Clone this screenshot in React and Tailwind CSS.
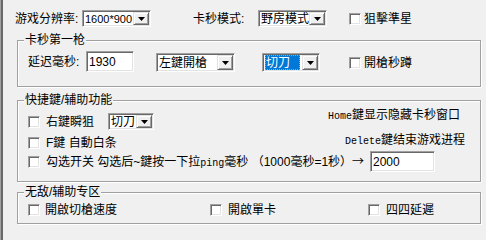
import React from "react";

const Arrow = () => (
  <svg width="7" height="4" viewBox="0 0 7 4">
    <path d="M0 0h7L3.5 4z" fill="#000" />
  </svg>
);

const Select = ({ size, text, focus }) => (
  <div className={`flex shrink-0 border border-t-[#a0a0a0] border-l-[#a0a0a0] border-r-white border-b-white ${size}`}>
    <div className="flex flex-1 bg-white p-px shadow-[inset_1px_1px_0_#696969,inset_-1px_-1px_0_#e3e3e3]">
      <div className="flex flex-1 items-center overflow-hidden whitespace-nowrap pl-px">
        {focus ? (
          <span className="flex h-full items-center bg-[#0078d7] pl-px pr-[10px] text-white outline-1 outline-dotted outline-[#d9a23a] -outline-offset-1">
            {text}
          </span>
        ) : (
          text
        )}
      </div>
      <div className="flex w-[16px] shrink-0 items-center justify-center border border-t-[#e3e3e3] border-l-[#e3e3e3] border-r-[#696969] border-b-[#696969] bg-[#f0f0f0] shadow-[inset_1px_1px_0_#fff,inset_-1px_-1px_0_#a0a0a0]">
        <Arrow />
      </div>
    </div>
  </div>
);

const Box = () => (
  <div className="h-[12px] w-[12px] shrink-0 border border-t-[#a0a0a0] border-l-[#a0a0a0] border-r-white border-b-white bg-white shadow-[inset_1px_1px_0_#696969,inset_-1px_-1px_0_#e3e3e3]" />
);

const Input = ({ size, value }) => (
  <div className={`flex shrink-0 items-center border border-t-[#a0a0a0] border-l-[#a0a0a0] border-r-white border-b-white bg-white pl-[2px] shadow-[inset_1px_1px_0_#696969,inset_-1px_-1px_0_#e3e3e3] ${size}`}>
    {value}
  </div>
);

const Group = ({ title, size, children }) => (
  <div className={`relative ml-[14px] w-[464px] border border-[#a0a0a0] shadow-[inset_1px_1px_0_#fff,1px_1px_0_#fff] ${size}`}>
    <span className="absolute left-[6px] top-[-9px] bg-[#f0f0f0] px-px leading-[16px]">{title}</span>
    {children}
  </div>
);

const Mono = ({ children }) => (
  <span className="font-['Liberation_Mono',monospace] text-[10px]">{children}</span>
);

export default function App() {
  return (
    <div className="flex h-[240px] w-[486px] bg-[#f0f0f0] font-['Liberation_Sans','Noto_Sans_CJK_SC',sans-serif] text-[12px] leading-[16px] text-black">
      <div className="w-px bg-[#a0a0a0]" />
      <div className="w-[2px] bg-[#696969]" />
      <div className="flex flex-1 flex-col">
        {/* top row */}
        <div className="mt-[10px] flex h-[17px] items-center pl-[12px]">
          <span className="w-[67px] shrink-0">游戏分辨率:</span>
          <Select size="w-[69px] h-[17px] text-[11px]" text="1600*900" />
          <span className="ml-[42px] w-[65px] shrink-0">卡秒模式:</span>
          <Select size="w-[69px] h-[17px]" text="野房模式" />
          <div className="ml-[22px]"><Box /></div>
          <span className="ml-[3px]">狙擊準星</span>
        </div>

        {/* 卡秒第一枪 */}
        <Group title="卡秒第一枪" size="mt-[13px] h-[47px]">
          <div className="flex items-start pl-[10px] pt-[10px]">
            <span className="mt-[3px] w-[58px] shrink-0">延迟毫秒:</span>
            <Input size="w-[48px] h-[21px]" value="1930" />
            <div className="ml-[22px] mt-[2px]">
              <Select size="w-[79px] h-[19px]" text="左鍵開槍" />
            </div>
            <div className="ml-[27px] mt-[2px]">
              <Select size="w-[58px] h-[19px]" text="切刀" focus />
            </div>
            <div className="ml-[29px] mt-[6px]"><Box /></div>
            <span className="ml-[3px] mt-[4px]">開槍秒蹲</span>
          </div>
        </Group>

        {/* 快捷鍵/辅助功能 */}
        <Group title="快捷鍵/辅助功能" size="mt-[13px] h-[82px]">
          <div className="flex flex-col pl-[10px]">
            <div className="flex">
              <div className="flex w-[300px] flex-col pt-[12px]">
                <div className="flex h-[17px] items-center">
                  <Box />
                  <span className="ml-[6px] w-[48px]">右鍵瞬狙</span>
                  <div className="ml-[14px]">
                    <Select size="w-[46px] h-[17px]" text="切刀" />
                  </div>
                </div>
                <div className="mt-[4px] flex h-[17px] items-center">
                  <Box />
                  <span className="ml-[6px]">F鍵 自動白条</span>
                </div>
              </div>
              <div className="flex flex-col pt-[6px]">
                <span><Mono>Home</Mono>鍵显示隐藏卡秒窗口</span>
                <span className="ml-[17px] mt-[7px]"><Mono>Delete</Mono>鍵结束游戏进程</span>
              </div>
            </div>
            <div className="flex h-[21px] items-center">
              <Box />
              <span className="ml-[6px] mt-[2px] w-[324px] shrink-0 whitespace-nowrap">
                勾选开关 勾选后~鍵按一下拉<Mono>ping</Mono>毫秒 （1000毫秒=1秒）<span className="font-['Noto_Sans_CJK_SC',sans-serif]">→</span>
              </span>
              <Input size="w-[65px] h-[21px]" value="2000" />
            </div>
          </div>
        </Group>

        {/* 无敌/辅助专区 */}
        <Group title="无敌/辅助专区" size="mt-[10px] h-[32px]">
          <div className="mt-[9px] flex h-[16px] items-center pl-[10px]">
            <div className="flex w-[182px] shrink-0 items-center">
              <Box />
              <span className="ml-[5px]">開啟切槍速度</span>
            </div>
            <div className="flex w-[158px] shrink-0 items-center">
              <Box />
              <span className="ml-[6px]">開啟單卡</span>
            </div>
            <div className="flex items-center">
              <Box />
              <span className="ml-[6px]">四四延遲</span>
            </div>
          </div>
        </Group>
      </div>
    </div>
  );
}
